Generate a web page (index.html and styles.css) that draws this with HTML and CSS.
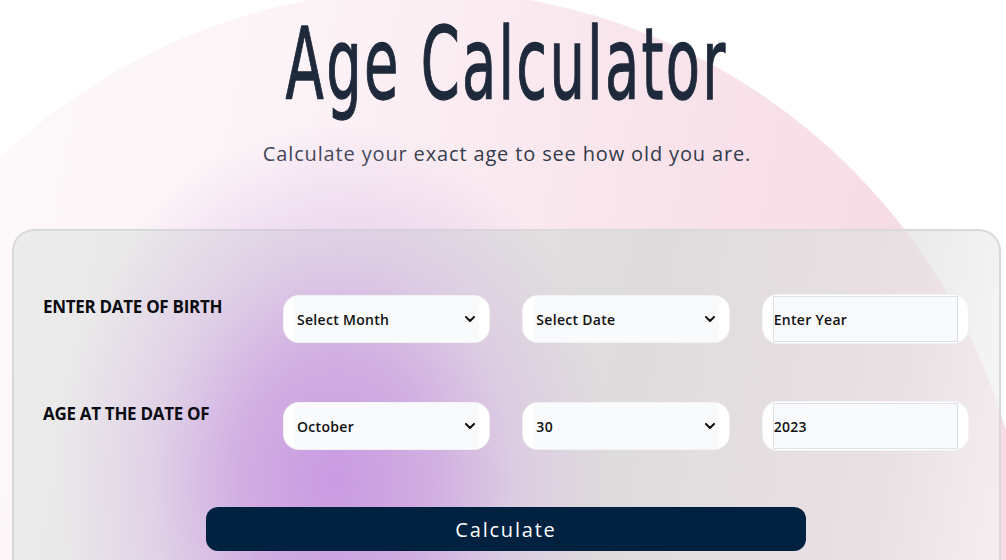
FILE: index.html
```html
<!DOCTYPE html>
<html lang="en">
<head>
<meta charset="utf-8">
<title>Age Calculator</title>
<link rel="stylesheet" href="styles.css">
</head>
<body>
<div class="bg-circle"></div>
<main class="page">
  <header class="header">
    <h1 class="title"><span class="title-text">Age Calculator</span></h1>
    <p class="subtitle">Calculate your exact age to see how old you are.</p>
  </header>
  <section class="card">
    <div class="blob"></div>
    <div class="grid">
      <div class="label">ENTER DATE OF BIRTH</div>
      <div class="field">
        <div class="select"><span>Select Month</span><svg class="chev" viewBox="0 0 10 6" width="10" height="6"><path d="M1 1l4 4 4-4"/></svg></div>
      </div>
      <div class="field">
        <div class="select"><span>Select Date</span><svg class="chev" viewBox="0 0 10 6" width="10" height="6"><path d="M1 1l4 4 4-4"/></svg></div>
      </div>
      <div class="field field-input">
        <input class="input" type="text" placeholder="Enter Year">
      </div>

      <div class="label">AGE AT THE DATE OF</div>
      <div class="field">
        <div class="select"><span>October</span><svg class="chev" viewBox="0 0 10 6" width="10" height="6"><path d="M1 1l4 4 4-4"/></svg></div>
      </div>
      <div class="field">
        <div class="select"><span>30</span><svg class="chev" viewBox="0 0 10 6" width="10" height="6"><path d="M1 1l4 4 4-4"/></svg></div>
      </div>
      <div class="field field-input">
        <input class="input" type="text" value="2023">
      </div>
    </div>
    <div class="actions">
      <button class="btn" type="button">Calculate</button>
    </div>
  </section>
</main>
</body>
</html>
```

FILE: styles.css
```css
html, body {
  margin: 0;
  padding: 0;
  height: 100%;
  overflow: hidden;
}
body {
  background: #ffffff;
  font-family: "Open Sans", "Noto Sans", sans-serif;
  color: #111;
  position: relative;
}
.bg-circle {
  position: absolute;
  z-index: -1;
  left: -190px;
  top: -10px;
  width: 1220px;
  height: 1220px;
  border-radius: 50%;
  background: linear-gradient(100deg, #fefcfd 0%, #fcf3f7 35%, #f9e4ec 60%, #f7dbe5 80%, #f7dbe5 100%);
}
.page {
  display: flex;
  flex-direction: column;
  align-items: stretch;
}
.header {
  padding-left: 8px;
}
.title {
  margin: 0;
  padding-top: 15px;
  height: 100px;
  line-height: 100px;
  text-align: center;
  font-family: "DejaVu Sans", sans-serif;
  font-weight: 400;
  font-size: 100px;
  color: #1e293b;
}
.title-text {
  display: inline-block;
  transform: scaleX(0.56);
  transform-origin: 50% 50%;
  letter-spacing: 4px;
  -webkit-text-stroke: 1.3px #1e293b;
}
.subtitle {
  margin: 25px 0 0;
  line-height: 28px;
  font-size: 20px;
  letter-spacing: 0.85px;
  text-align: center;
  color: #333a4a;
}
.card {
  position: relative;
  margin: 61px 5px 0 12px;
  height: 400px;
  border: 2px solid #d9d9d9;
  border-bottom: none;
  border-radius: 22px 22px 0 0;
  padding: 64px 30px 0 29px;
  background: linear-gradient(100deg, rgba(234,234,234,0.85) 0%, rgba(224,224,224,0.85) 35%, rgba(218,218,218,0.85) 60%, rgba(228,226,227,0.7) 85%, rgba(248,248,248,0.7) 100%);
}
.blob {
  position: absolute;
  z-index: 1;
  left: 40px;
  top: -110px;
  width: 560px;
  height: 720px;
  border-radius: 50%;
  background: radial-gradient(closest-side, rgba(200,150,226,0.95) 0%, rgba(204,160,226,0.78) 35%, rgba(214,180,230,0.42) 65%, rgba(225,200,235,0) 100%);
  pointer-events: none;
}
.grid {
  position: relative;
  z-index: 2;
  display: grid;
  grid-template-columns: 208px repeat(3, minmax(0, 1fr));
  grid-auto-rows: 48px;
  column-gap: 32px;
  row-gap: 59px;
}
.label {
  align-self: start;
  font-weight: 700;
  font-size: 17px;
  line-height: 24px;
  color: #0b0b12;
  letter-spacing: -0.3px;
  white-space: nowrap;
}
.field {
  box-sizing: border-box;
  min-width: 0;
  height: 48px;
  background: #ffffff;
  border: 1px solid rgba(0,0,0,0.05);
  border-radius: 16px;
  padding: 0 10px;
  display: flex;
}
.field-input {
  padding: 1px 10px;
  height: 50px;
  margin-top: -1px;
}
.select {
  flex: 1;
  display: flex;
  align-items: center;
  justify-content: space-between;
  background: #f8fafc;
  padding: 0 4px 0 3px;
  font-size: 14px;
  font-weight: 600;
  letter-spacing: 0.3px;
  color: #111;
}
.chev {
  fill: none;
  stroke: #111;
  stroke-width: 2;
  stroke-linecap: round;
  stroke-linejoin: round;
}
.input {
  flex: 1;
  min-width: 0;
  width: 0;
  box-sizing: border-box;
  height: 100%;
  border: 1px solid #dbe2ea;
  background: #f8fafc;
  padding: 0;
  margin: 0;
  font-family: inherit;
  font-size: 14px;
  font-weight: 600;
  letter-spacing: 0.3px;
  color: #111;
  outline: none;
}
.input::placeholder {
  color: #111;
  opacity: 1;
}
.actions {
  position: relative;
  z-index: 2;
  display: flex;
  justify-content: center;
  margin-top: 57px;
}
.btn {
  width: 600px;
  height: 44px;
  border: none;
  border-radius: 12px;
  background: #002140;
  color: #ffffff;
  font-family: inherit;
  font-size: 20px;
  font-weight: 400;
  letter-spacing: 1.8px;
  cursor: pointer;
}
```
